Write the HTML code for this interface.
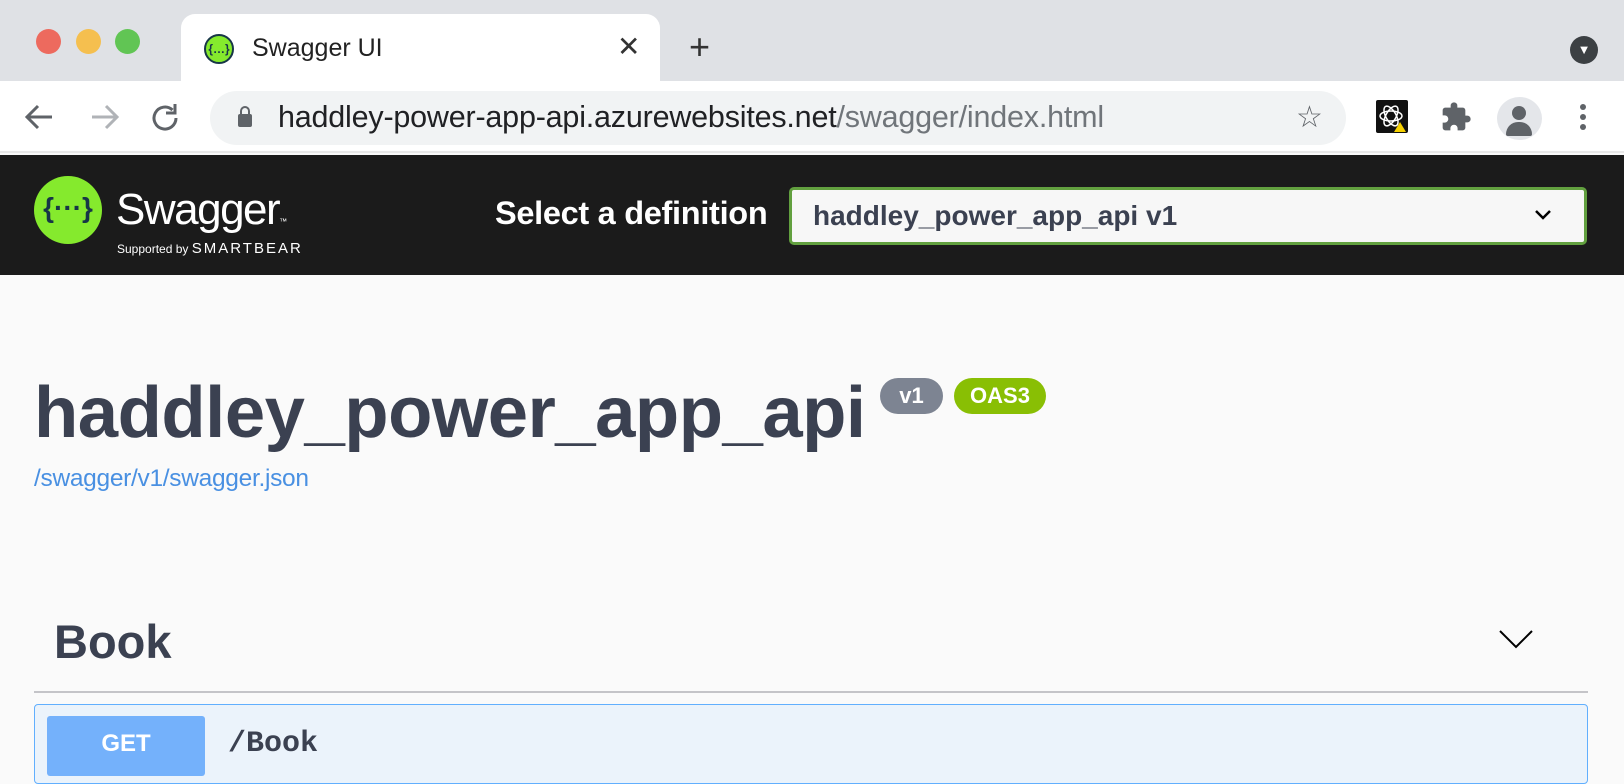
<!DOCTYPE html>
<html><head><meta charset="utf-8"><style>
*{box-sizing:border-box;margin:0;padding:0}
body{width:1624px;height:772px;overflow:hidden;background:#fafafa;font-family:"Liberation Sans",Arial,sans-serif;position:relative}
.abs{position:absolute}
</style></head><body>
<div class="abs" style="left:0;top:0;width:1624px;height:81px;background:#dfe1e5"></div>
<div class="abs" style="left:36px;top:29px;width:25px;height:25px;border-radius:50%;background:#ed6a5e"></div>
<div class="abs" style="left:76px;top:29px;width:25px;height:25px;border-radius:50%;background:#f5bf4f"></div>
<div class="abs" style="left:115px;top:29px;width:25px;height:25px;border-radius:50%;background:#61c554"></div>
<div class="abs" style="left:181px;top:14px;width:479px;height:70px;background:#fff;border-radius:14px 14px 0 0"></div>
<div class="abs" style="left:204px;top:34px;width:30px;height:30px;border-radius:50%;background:#85ea2d;border:2px solid #173647;font-size:12px;color:#173647;text-align:center;line-height:26px;font-weight:bold">{…}</div>
<div class="abs" style="left:252px;top:34px;font-size:25px;color:#222">Swagger UI</div>
<div class="abs" style="left:617px;top:30px;font-size:28px;color:#333">✕</div>
<div class="abs" style="left:689px;top:26px;font-size:36px;color:#333;font-weight:300">+</div>
<div class="abs" style="left:1570px;top:36px;width:28px;height:28px;border-radius:50%;background:#3c4043;color:#fff;font-size:13px;text-align:center;line-height:28px">▼</div>
<div class="abs" style="left:0;top:81px;width:1624px;height:72px;background:#fff;border-bottom:2px solid #e8e8e8"></div>
<svg class="abs" style="left:20px;top:100px" width="160" height="36" viewBox="0 0 160 36" fill="none" stroke-width="3">
<path d="M32 17H8M18 6L7 17l11 11" stroke="#5f6368"/>
<path d="M72 17h24M86 6l11 11-11 11" stroke="#b0b3b7"/>
<path d="M156 18a11 11 0 1 1-3.5-8" stroke="#5f6368"/>
<path d="M155 4v9h-9" stroke="#5f6368"/>
</svg>
<div class="abs" style="left:210px;top:91px;width:1136px;height:54px;border-radius:27px;background:#f1f3f4"></div>
<div class="abs" style="left:238px;top:114px;width:14px;height:13px;background:#5f6368;border-radius:2px"></div>
<div class="abs" style="left:240px;top:106px;width:10px;height:12px;border:2.5px solid #5f6368;border-radius:5px 5px 0 0;border-bottom:none"></div>
<div class="abs" style="left:278px;top:100px;font-size:30.5px;color:#202124;white-space:nowrap;letter-spacing:-0.2px">haddley-power-app-api.azurewebsites.net<span style="color:#70757a">/swagger/index.html</span></div>
<div class="abs" style="left:1296px;top:100px;font-size:30px;color:#5f6368">☆</div>
<div class="abs" style="left:1376px;top:100px;width:32px;height:33px;background:#111;border-radius:2px"></div>
<svg class="abs" style="left:1376px;top:100px" width="32" height="33"><ellipse cx="15" cy="16" rx="11" ry="5" fill="none" stroke="#fff" stroke-width="1.5"/><ellipse cx="15" cy="16" rx="11" ry="5" fill="none" stroke="#fff" stroke-width="1.5" transform="rotate(60 15 16)"/><ellipse cx="15" cy="16" rx="11" ry="5" fill="none" stroke="#fff" stroke-width="1.5" transform="rotate(-60 15 16)"/><path d="M24 22l6 10h-12z" fill="#f5d000"/></svg>
<svg class="abs" style="left:1440px;top:101px" width="32" height="32" viewBox="0 0 24 24"><path fill="#5f6368" d="M20.5 11H19V7c0-1.1-.9-2-2-2h-4V3.5a2.5 2.5 0 0 0-5 0V5H4c-1.1 0-2 .9-2 2v3.8h1.5c1.5 0 2.7 1.2 2.7 2.7S5 16.2 3.5 16.2H2V20c0 1.1.9 2 2 2h3.8v-1.5c0-1.5 1.2-2.7 2.7-2.7s2.7 1.2 2.7 2.7V22H17c1.1 0 2-.9 2-2v-4h1.5a2.5 2.5 0 0 0 0-5z"/></svg>
<div class="abs" style="left:1497px;top:97px;width:45px;height:43px;border-radius:50%;background:#e4e6ea;overflow:hidden">
<div class="abs" style="left:15px;top:9px;width:14px;height:14px;border-radius:50%;background:#5f6368"></div>
<div class="abs" style="left:9px;top:25px;width:26px;height:14px;border-radius:13px 13px 2px 2px;background:#5f6368"></div></div>
<div class="abs" style="left:1580px;top:104px;width:6px;height:6px;border-radius:50%;background:#5f6368;box-shadow:0 10px 0 #5f6368,0 20px 0 #5f6368"></div>
<div class="abs" style="left:0;top:155px;width:1624px;height:120px;background:#1b1b1b"></div>
<div class="abs" style="left:34px;top:176px;width:68px;height:68px;border-radius:50%;background:#85ea2d;color:#173647;font-size:28px;font-weight:bold;text-align:center;line-height:64px">{···}</div>
<div class="abs" style="left:116px;top:185px;font-size:44px;color:#fff;letter-spacing:-1.5px">Swagger<span style="font-size:8px">™</span></div>
<div class="abs" style="left:117px;top:240px;font-size:12px;color:#fff">Supported by <span style="font-size:15px;letter-spacing:2px">SMARTBEAR</span></div>
<div class="abs" style="left:495px;top:195px;font-size:32.5px;font-weight:bold;color:#fff;letter-spacing:-0.3px">Select a definition</div>
<div class="abs" style="left:789px;top:187px;width:798px;height:58px;border:3px solid #62a03f;border-radius:5px;background:#f7f7f7"></div>
<div class="abs" style="left:813px;top:200px;font-size:28px;font-weight:bold;color:#3b4151">haddley_power_app_api v1</div>
<svg class="abs" style="left:1533px;top:208px" width="20" height="14"><path d="M3 3l7 7 7-7" stroke="#000" stroke-width="2.5" fill="none"/></svg>
<div class="abs" style="left:34px;top:370px;font-size:72.5px;font-weight:bold;color:#3b4151;letter-spacing:-0.5px;line-height:86px">haddley_power_app_api</div>
<div class="abs" style="left:880px;top:378px;width:63px;height:36px;border-radius:18px;background:#7d8492;color:#fff;font-weight:bold;font-size:22px;text-align:center;line-height:36px">v1</div>
<div class="abs" style="left:954px;top:378px;width:92px;height:36px;border-radius:18px;background:#89bf04;color:#fff;font-weight:bold;font-size:22px;text-align:center;line-height:36px">OAS3</div>
<div class="abs" style="left:34px;top:465px;font-size:24.5px;color:#4990e2;letter-spacing:-0.3px">/swagger/v1/swagger.json</div>
<div class="abs" style="left:54px;top:614px;font-size:47px;font-weight:bold;color:#3b4151">Book</div>
<svg class="abs" style="left:1498px;top:628px" width="36" height="22"><path d="M2 3l16 16 16-16" stroke="#000" stroke-width="2" fill="none"/></svg>
<div class="abs" style="left:34px;top:691px;width:1554px;height:2px;background:#c4c4c8"></div>
<div class="abs" style="left:34px;top:704px;width:1554px;height:80px;border:1px solid #61affe;border-radius:4px;background:#ebf3fb"></div>
<div class="abs" style="left:47px;top:716px;width:158px;height:60px;border-radius:3px;background:#74b1fb"></div>
<div class="abs" style="left:47px;top:730px;width:158px;text-align:center;font-size:24px;font-weight:bold;color:#fff">GET</div>
<div class="abs" style="left:228px;top:727px;font-size:30px;font-weight:bold;font-family:'Liberation Mono',monospace;color:#3b4151">/Book</div>
</body></html>
